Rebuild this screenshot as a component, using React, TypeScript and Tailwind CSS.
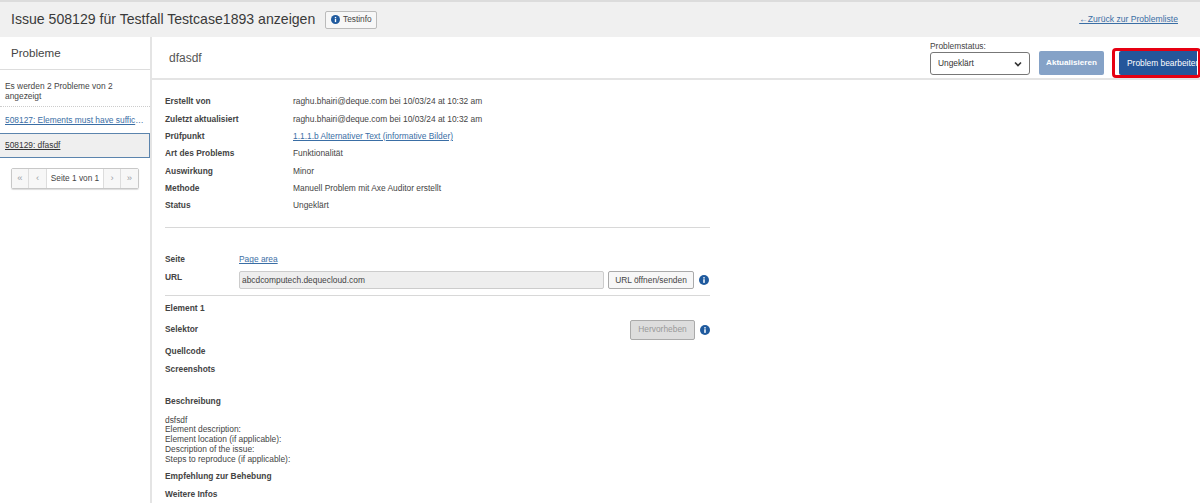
import React from "react";

const infoRows = [
  { label: "Erstellt von", value: "raghu.bhairi@deque.com bei 10/03/24 at 10:32 am" },
  { label: "Zuletzt aktualisiert", value: "raghu.bhairi@deque.com bei 10/03/24 at 10:32 am" },
  { label: "Prüfpunkt", value: "1.1.1.b Alternativer Text (informative Bilder)", link: true },
  { label: "Art des Problems", value: "Funktionalität" },
  { label: "Auswirkung", value: "Minor" },
  { label: "Methode", value: "Manuell Problem mit Axe Auditor erstellt" },
  { label: "Status", value: "Ungeklärt" },
];

const InfoIcon = ({ size = 11 }: { size?: number }) => (
  <svg width={size} height={size} viewBox="0 0 16 16" className="shrink-0">
    <circle cx="8" cy="8" r="8" fill="#1f5a9e" />
    <rect x="6.8" y="6.8" width="2.4" height="5.8" fill="#fff" />
    <rect x="6.8" y="3.4" width="2.4" height="2.2" fill="#fff" />
  </svg>
);

const Pager = () => (
  <div className="mx-auto mt-[10px] flex h-[21px] w-[128px] rounded-[2px] border border-[#c8c8c8] text-[9.5px] text-[#9aa0a6] shadow-[0_1px_1px_#ddd]">
    <span className="flex w-[17px] items-center justify-center border-r border-[#ddd] bg-[#f7f7f7]">«</span>
    <span className="flex w-[18px] items-center justify-center border-r border-[#ddd] bg-[#f7f7f7]">‹</span>
    <span className="flex flex-1 items-center justify-center border-r border-[#ddd] text-[8.3px] text-[#444]">Seite 1 von 1</span>
    <span className="flex w-[17px] items-center justify-center border-r border-[#ddd] bg-[#f7f7f7]">›</span>
    <span className="flex w-[17px] items-center justify-center bg-[#f7f7f7]">»</span>
  </div>
);

export default function App() {
  return (
    <div className="relative h-[503px] w-[1200px] overflow-hidden bg-white font-['Liberation_Sans',Arial,sans-serif] text-[8.4px] text-[#444]">
      {/* Top bar */}
      <div className="flex h-[37px] items-center border-t-2 border-[#dcdcdc] bg-[#f0f0f0] pl-[11px] pr-[22px]">
        <h1 className="text-[14.1px] text-[#3a3a3a]">Issue 508129 für Testfall Testcase1893 anzeigen</h1>
        <button className="ml-[10px] flex h-[18px] w-[52px] items-center justify-center gap-[3px] rounded-[2px] border border-[#bbb] bg-[#f7f7f7] text-[8.3px] text-[#444]">
          <InfoIcon size={9} />
          Testinfo
        </button>
        <a className="ml-auto text-[8.6px] text-[#3a6ea5] underline">←Zurück zur Problemliste</a>
      </div>

      <div className="flex h-[466px]">
        {/* Sidebar */}
        <aside className="w-[152px] shrink-0 border-r-2 border-[#e4e4e4]">
          <div className="flex h-[33px] items-center border-b border-[#ddd] pl-[11px] pb-[1px] text-[11.6px]">Probleme</div>
          <div className="h-[37px] border-b border-dotted border-[#ccc] pl-[5px] pr-[4px] pt-[11px] leading-[10px]">
            Es werden 2 Probleme von 2 angezeigt
          </div>
          <div className="flex h-[26px] items-center pl-[5px] pr-[6px] text-[#3a6ea5] underline">
            <span className="truncate">508127: Elements must have sufficient contrast</span>
          </div>
          <div className="flex h-[25px] items-center border border-l-0 border-[#5b84ad] bg-[#efefef] pl-[5px] pb-[1px] text-[#333] underline">
            508129: dfasdf
          </div>
          <Pager />
        </aside>

        {/* Main content */}
        <main className="min-w-0 flex-1">
          <div className="flex h-[43px] items-center border-b-2 border-[#e4e4e4] pl-[17px]">
            <h2 className="text-[12px] text-[#555]">dfasdf</h2>
            <div className="ml-auto flex items-end pt-[2px]">
              <label className="mr-[9px] flex flex-col leading-[9px]">
                Problemstatus:
                <span className="mt-[1px] flex h-[23px] w-[100px] items-center justify-between rounded-[3px] border border-[#777] bg-white px-[7px] text-[#333]">
                  Ungeklärt
                  <svg width="8" height="6" viewBox="0 0 8 6"><path d="M1 1.5 4 4.5 7 1.5" fill="none" stroke="#333" strokeWidth="1.6" /></svg>
                </span>
              </label>
              <button className="mr-[15px] h-[24px] w-[65px] rounded-[2px] bg-[#85a2c7] text-[8.1px] font-bold text-white">Aktualisieren</button>
              <button className="mr-[3px] h-[24px] w-[78px] overflow-hidden whitespace-nowrap rounded-l-[2px] bg-[#25569a] pl-[8px] text-left text-white">Problem bearbeiten</button>
            </div>
          </div>

          <div className="w-[558px] pl-[13px]">
            <dl className="border-b border-[#d8d8d8] pb-[13px] pt-[13px]">
              {infoRows.map((row) => (
                <div key={row.label} className="flex h-[17.3px] items-center">
                  <dt className="w-[128px] font-bold">{row.label}</dt>
                  <dd className={row.link ? "text-[#3a6ea5] underline" : ""}>{row.value}</dd>
                </div>
              ))}
            </dl>

            <div className="mt-[24px] flex h-[15px] items-center">
              <span className="w-[74px] font-bold">Seite</span>
              <a className="text-[#3a6ea5] underline">Page area</a>
            </div>
            <div className="mt-[4px] flex items-center">
              <span className="w-[74px] pb-[6px] font-bold">URL</span>
              <div className="flex h-[18px] w-[365px] items-center rounded-[2px] border border-[#ccc] bg-[#eee] pl-[2px]">abcdcomputech.dequecloud.com</div>
              <button className="ml-[4px] h-[18px] w-[86px] rounded-[2px] border border-[#aaa] bg-[#f7f7f7]">URL öffnen/senden</button>
              <span className="ml-[5px]"><InfoIcon size={10} /></span>
            </div>
            <div className="mt-[5px] border-t border-[#d8d8d8] pt-[6px]">
              <div className="h-[15px] font-bold">Element 1</div>
              <div className="mt-[3px] flex h-[20px] items-center">
                <span className="font-bold">Selektor</span>
                <button className="ml-auto h-[20px] w-[65px] rounded-[2px] border border-[#aaa] bg-[#ddd] text-[#999]">Hervorheben</button>
                <span className="ml-[5px]"><InfoIcon size={10} /></span>
              </div>
              <div className="mt-[4px] font-bold leading-[14px]">Quellcode</div>
              <div className="mt-[4px] font-bold leading-[14px]">Screenshots</div>
              <div className="mt-[18px] font-bold leading-[14px]">Beschreibung</div>
              <p className="mt-[8px] leading-[9.7px]">
                dsfsdf<br />
                Element description:<br />
                Element location (if applicable):<br />
                Description of the issue:<br />
                Steps to reproduce (if applicable):
              </p>
              <div className="mt-[5px] font-bold leading-[14px]">Empfehlung zur Behebung</div>
              <div className="mt-[4px] font-bold leading-[14px]">Weitere Infos</div>
            </div>
          </div>
        </main>
      </div>

      {/* Red annotation box over the edit button */}
      <div className="absolute left-[1112px] top-[48px] h-[30px] w-[89px] rounded-[4px] border-[3px] border-[#e60012]" />
    </div>
  );
}
